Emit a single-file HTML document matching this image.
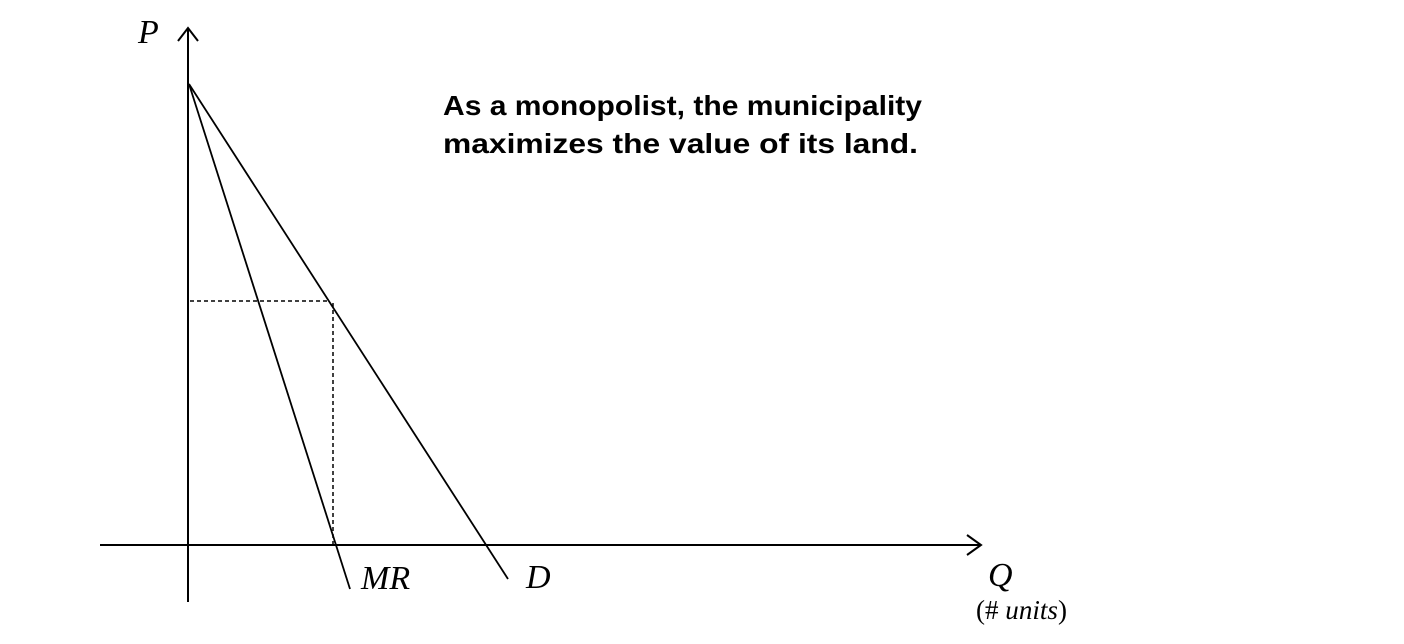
<!DOCTYPE html>
<html><head><style>html,body{margin:0;padding:0;background:#fff;}svg{display:block}</style></head>
<body>
<svg width="1404" height="644" viewBox="0 0 1404 644" xmlns="http://www.w3.org/2000/svg">
<g stroke="#000" fill="none" stroke-width="2">
<line x1="188" y1="28" x2="188" y2="602"/>
<polyline points="178,41 188,28 198,41"/>
<line x1="100" y1="545" x2="980" y2="545"/>
<polyline points="967,535 981,545 967,555"/>
</g>
<g stroke="#000" fill="none" stroke-width="1.8">
<line x1="189" y1="84" x2="350" y2="589"/>
<line x1="189" y1="84" x2="508" y2="579"/>
</g>
<g stroke="#000" fill="none" stroke-width="1.5" stroke-dasharray="4,3">
<line x1="190" y1="301" x2="330" y2="301"/>
<line x1="333" y1="303" x2="333" y2="545"/>
</g>
<g font-family="Liberation Serif, serif" font-style="italic" font-size="34" fill="#000">
<text x="138" y="43">P</text>
<text x="361" y="589">MR</text>
<text x="526" y="588">D</text>
<text x="988" y="586">Q</text>
</g>
<text x="976" y="619" font-family="Liberation Serif, serif" font-size="27" fill="#000" textLength="91" lengthAdjust="spacingAndGlyphs">(# <tspan font-style="italic">units</tspan>)</text>
<g font-family="Liberation Sans, sans-serif" font-weight="bold" font-size="28" fill="#000">
<text x="443" y="115" textLength="479" lengthAdjust="spacingAndGlyphs">As a monopolist, the municipality</text>
<text x="443" y="153" textLength="475" lengthAdjust="spacingAndGlyphs">maximizes the value of its land.</text>
</g>
</svg>
</body></html>
